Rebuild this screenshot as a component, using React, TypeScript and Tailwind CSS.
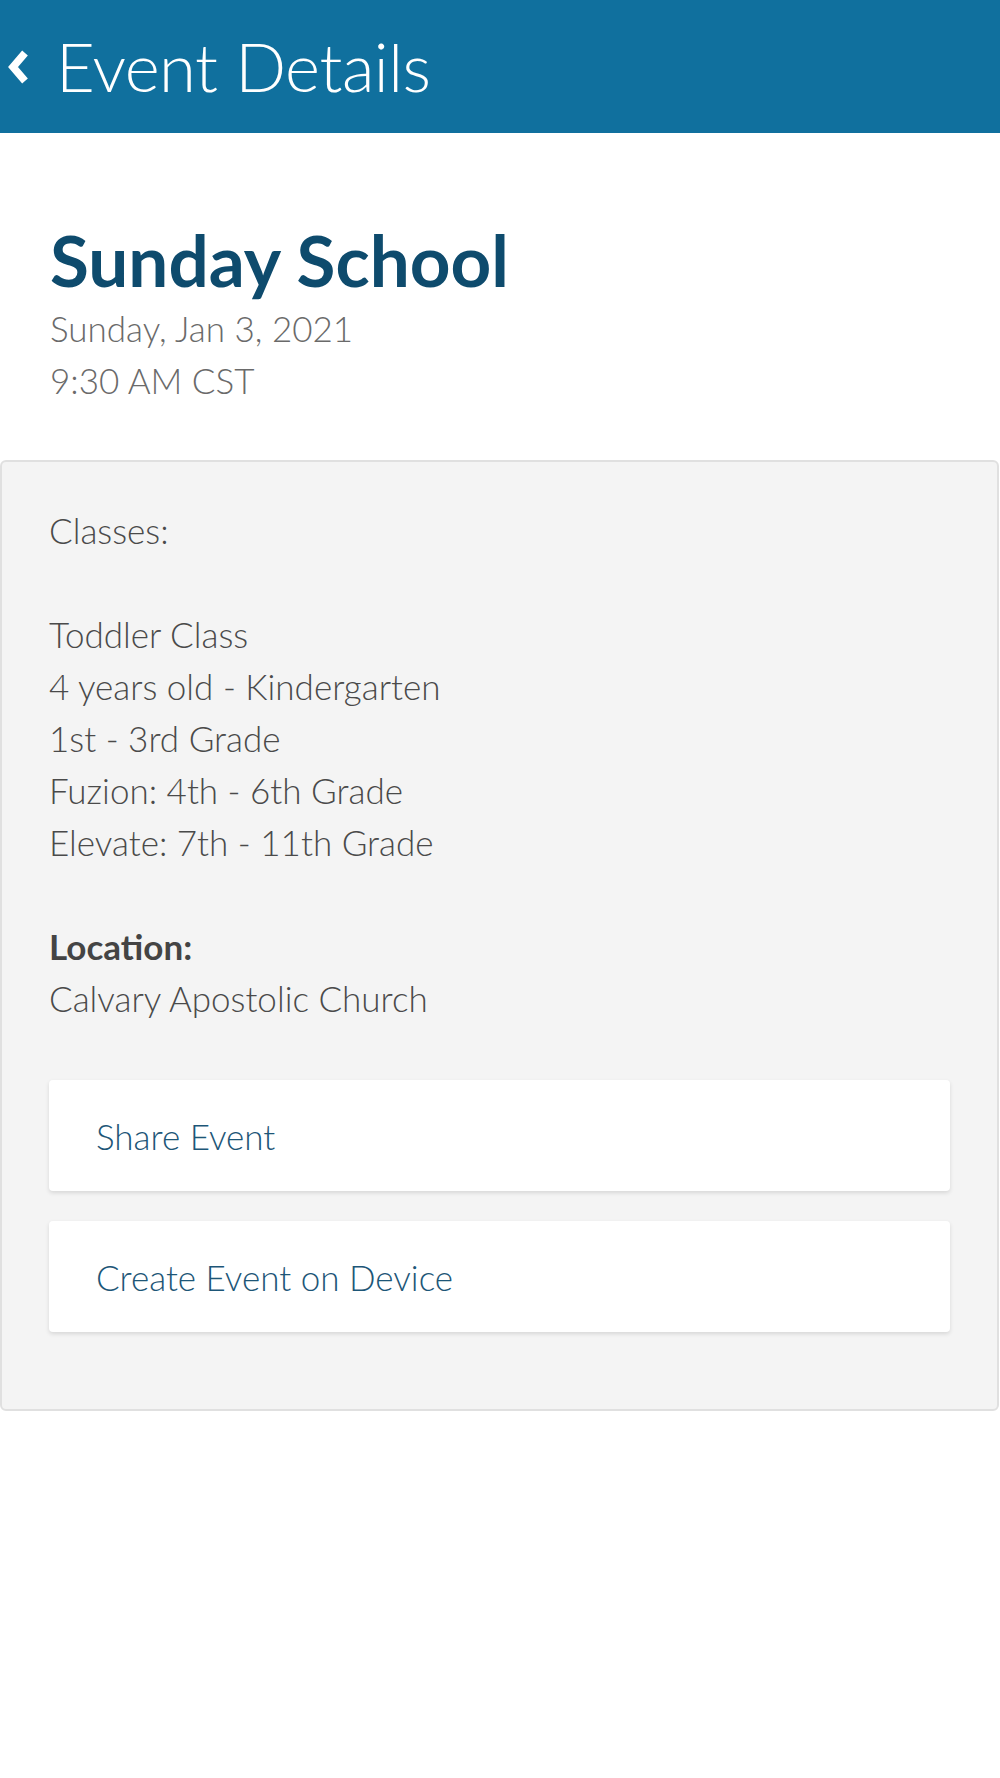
const classes = [
  "Toddler Class",
  "4 years old - Kindergarten",
  "1st - 3rd Grade",
  "Fuzion: 4th - 6th Grade",
  "Elevate: 7th - 11th Grade",
];

function BackIcon() {
  return (
    <svg viewBox="0 0 24 36" className="ml-[5px] h-[36px] w-[24px]" fill="none">
      <polyline points="20,4 8,18 20,32" stroke="white" strokeWidth="7.5" strokeLinejoin="miter" />
    </svg>
  );
}

function ActionButton({ label }: { label: string }) {
  return (
    <button className="flex h-[111px] w-full items-center rounded-[4px] bg-white pl-[47px] text-left text-[35px] font-light text-[#1d5677] shadow-[0_2px_4px_rgba(0,0,0,0.12)]">
      {label}
    </button>
  );
}

export default function App() {
  return (
    <div className="min-h-[1778px] bg-white font-['Lato',sans-serif]">
      <header className="flex h-[133px] items-center bg-[#10709e] text-white">
        <BackIcon />
        <h1 className="ml-[27px] text-[67px] font-light leading-none tracking-[-0.5px]">Event Details</h1>
      </header>

      <section className="px-[50px] pb-[54px] pt-[92px]">
        <h2 className="text-[71px] font-bold leading-[70px] text-[#0e4b6d]">Sunday School</h2>
        <p className="mt-[7px] text-[35px] font-light leading-[52px] text-[#6a6a6a]">Sunday, Jan 3, 2021</p>
        <p className="text-[35px] font-light leading-[52px] text-[#6a6a6a]">9:30 AM CST</p>
      </section>

      <div className="mr-[1px] rounded-[6px] border-2 border-[#e0e0e0] bg-[#f4f4f4] px-[47px] pb-[77px] pt-[42px] text-[35px] font-light leading-[52px] text-[#4a4a4a]">
        <p>Classes:</p>
        <p>&nbsp;</p>
        {classes.map((c) => (
          <p key={c}>{c}</p>
        ))}
        <p>&nbsp;</p>
        <p className="font-bold text-[#444]">Location:</p>
        <p>Calvary Apostolic Church</p>

        <div className="mt-[56px] flex flex-col gap-[30px]">
          <ActionButton label="Share Event" />
          <ActionButton label="Create Event on Device" />
        </div>
      </div>
    </div>
  );
}
